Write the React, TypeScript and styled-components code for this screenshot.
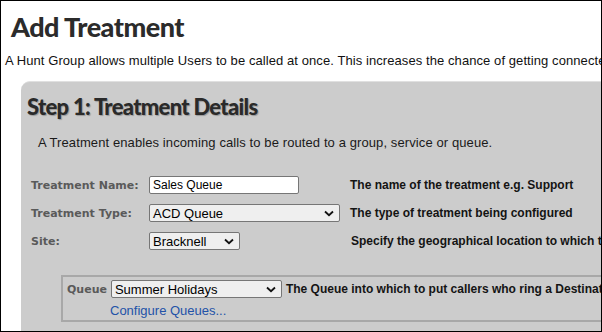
import React from "react";
import styled, { createGlobalStyle } from "styled-components";

const Global = createGlobalStyle`
  html, body { margin: 0; padding: 0; background: #fff; }
  * { box-sizing: border-box; }
`;

const Frame = styled.div`
  width: 602px;
  height: 332px;
  border: 1px solid #000;
  overflow: hidden;
  background: #fff;
  font-family: "Liberation Sans", Arial, sans-serif;
`;

const Title = styled.h1`
  margin: 0;
  padding: 10px 0 0 10px;
  font-family: Lato, "Liberation Sans", sans-serif;
  font-weight: 900;
  font-size: 27px;
  line-height: 32px;
  color: #2b2b2b;
  letter-spacing: -0.5px;
  white-space: nowrap;
`;

const Intro = styled.p`
  margin: 10px 0 0 4px;
  font-size: 13px;
  line-height: 16px;
  letter-spacing: 0.08px;
  color: #111;
  white-space: nowrap;
`;

const Panel = styled.section`
  margin: 12px 0 0 20px;
  background: #cccccc;
  border-top: 1px solid #e0e0e0;
  border-top-left-radius: 9px;
  padding: 12px 0 0 6px;
  height: 260px;
`;

const StepTitle = styled.h2`
  margin: 0;
  font-family: Lato, "Liberation Sans", sans-serif;
  font-weight: 900;
  font-size: 22px;
  line-height: 26px;
  letter-spacing: -0.7px;
  color: #2a2a2a;
  text-shadow: 1px 1px 1px rgba(0, 0, 0, 0.25);
  white-space: nowrap;
`;

const StepIntro = styled.p`
  margin: 15px 0 0 11px;
  font-size: 13px;
  line-height: 16px;
  letter-spacing: 0.1px;
  color: #1a1a1a;
  white-space: nowrap;
`;

const Form = styled.div`
  margin-top: 25px;
  display: grid;
  grid-template-columns: 118px 201px auto;
  row-gap: 10px;
  padding-left: 4px;
`;

const Label = styled.label`
  font-family: "DejaVu Sans", Verdana, sans-serif;
  font-weight: 700;
  font-size: 11px;
  color: #5a5a5a;
  align-self: center;
  white-space: nowrap;
`;

const TextInput = styled.input`
  width: 150px;
  height: 18px;
  border: 1px solid #767676;
  border-radius: 2px;
  padding: 0 3px;
  font-family: "Liberation Sans", Arial, sans-serif;
  font-size: 12px;
  color: #000;
  background: #fff;
  align-self: center;
`;

const SelectBox = styled.div<{ $w: number }>`
  width: ${(p) => p.$w}px;
  height: 18px;
  border: 1px solid #767676;
  border-radius: 2px;
  background: #efefef;
  display: flex;
  align-items: center;
  justify-content: space-between;
  padding: 0 5px 0 3px;
  font-family: "Liberation Sans", Arial, sans-serif;
  font-size: 13px;
  color: #000;
  align-self: center;
  flex-shrink: 0;
`;

const Help = styled.span<{ $shift?: number }>`
  font-family: "Liberation Sans", Arial, sans-serif;
  font-weight: 700;
  font-size: 12px;
  color: #141414;
  white-space: nowrap;
  align-self: center;
  margin-left: ${(p) => p.$shift ?? 0}px;
`;

const QueueBox = styled.div`
  margin: 25px 0 0 34px;
  border: 2px solid #a8a8a8;
  border-right: none;
  padding: 3px 0 3px 4px;
  height: 47px;
`;

const QueueRow = styled.div`
  display: flex;
  align-items: center;
  gap: 4px;
`;

const QueueLabel = styled.span`
  font-family: "DejaVu Sans", Verdana, sans-serif;
  font-weight: 700;
  font-size: 11px;
  color: #5a5a5a;
`;

const Link = styled.a`
  display: block;
  margin: 5px 0 0 43px;
  font-family: "Liberation Sans", Arial, sans-serif;
  font-size: 13px;
  line-height: 15px;
  color: #2352a8;
  text-decoration: none;
  white-space: nowrap;
`;

const Chevron = () => (
  <svg width="10" height="7" viewBox="0 0 10 7">
    <path d="M1 1.5 L5 5.2 L9 1.5" fill="none" stroke="#111" strokeWidth="1.8" />
  </svg>
);

const Select = ({ w, value }: { w: number; value: string }) => (
  <SelectBox $w={w}>
    <span>{value}</span>
    <Chevron />
  </SelectBox>
);

export default function App() {
  return (
    <Frame>
      <Global />
      <Title>Add Treatment</Title>
      <Intro>
        A Hunt Group allows multiple Users to be called at once. This increases the chance of
        getting connected to the right person.
      </Intro>
      <Panel>
        <StepTitle>Step 1: Treatment Details</StepTitle>
        <StepIntro>
          A Treatment enables incoming calls to be routed to a group, service or queue.
        </StepIntro>
        <Form>
          <Label>Treatment Name:</Label>
          <TextInput defaultValue="Sales Queue" />
          <Help>The name of the treatment e.g. Support</Help>
          <Label>Treatment Type:</Label>
          <Select w={191} value="ACD Queue" />
          <Help>The type of treatment being configured</Help>
          <Label>Site:</Label>
          <Select w={91} value="Bracknell" />
          <Help $shift={1}>Specify the geographical location to which the treatment belongs</Help>
        </Form>
        <QueueBox>
          <QueueRow>
            <QueueLabel>Queue</QueueLabel>
            <Select w={171} value="Summer Holidays" />
            <Help>The Queue into which to put callers who ring a Destination</Help>
          </QueueRow>
          <Link href="#">Configure Queues...</Link>
        </QueueBox>
      </Panel>
    </Frame>
  );
}
